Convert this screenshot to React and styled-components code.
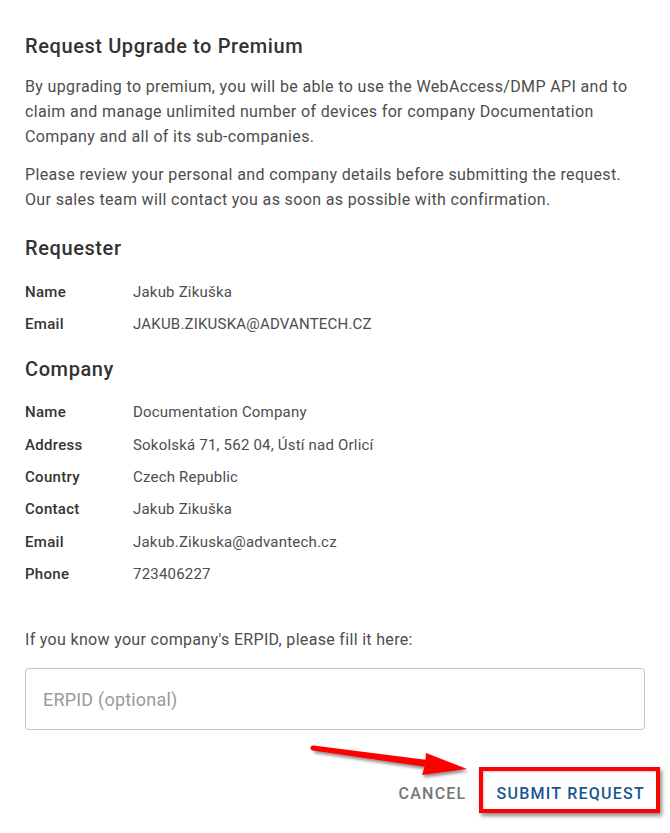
import React from 'react';
import styled, { createGlobalStyle } from 'styled-components';

const GlobalStyle = createGlobalStyle`
  body {
    margin: 0;
    background: #fff;
    font-family: Roboto, "Liberation Sans", sans-serif;
  }
`;

const Page = styled.div`
  position: relative;
  width: 670px;
  height: 833px;
  box-sizing: border-box;
  padding: 32px 25px 0 25px;
  overflow: hidden;
`;

const Title = styled.h2`
  margin: 0;
  font-size: 20px;
  line-height: 28px;
  font-weight: 500;
  color: #333;
  letter-spacing: 0.6px;
`;

const Text = styled.p`
  margin: ${p => p.$top || 0}px 0 0 0;
  font-size: 16px;
  line-height: 25px;
  color: #4d4d4d;
  letter-spacing: 0.36px;
`;

const Section = styled.h3`
  margin: ${p => p.$top}px 0 0 0;
  font-size: 20px;
  line-height: 28px;
  font-weight: 500;
  color: #333;
  letter-spacing: 0.6px;
`;

const Details = styled.div`
  margin-top: ${p => p.$top}px;
  display: grid;
  grid-template-columns: 108px 1fr;
  grid-auto-rows: ${p => p.$row}px;
  align-items: center;
  font-size: 15px;
`;

const Label = styled.div`
  font-weight: 500;
  color: #333;
  letter-spacing: 0.3px;
`;

const Value = styled.div`
  color: #4d4d4d;
  letter-spacing: 0.2px;
`;

const Hint = styled.p`
  margin: 38px 0 0 0;
  font-size: 16px;
  line-height: 24px;
  color: #4d4d4d;
  letter-spacing: 0.32px;
`;

const Input = styled.input`
  display: block;
  box-sizing: border-box;
  width: 100%;
  height: 62px;
  margin-top: 16px;
  padding: 0 17px;
  border: 1px solid #c4c4c4;
  border-radius: 4px;
  font-family: Roboto, "Liberation Sans", sans-serif;
  font-size: 18px;
  letter-spacing: 0.2px;
  color: #333;
  outline: none;

  &::placeholder {
    color: #9a9a9a;
  }
`;

const Actions = styled.div`
  display: flex;
  justify-content: flex-end;
  align-items: center;
  gap: 30px;
  margin-top: 45px;
`;

const Button = styled.button`
  position: relative;
  height: 36px;
  padding: 0;
  border: none;
  background: none;
  font-family: Roboto, "Liberation Sans", sans-serif;
  font-size: 16px;
  font-weight: 500;
  letter-spacing: 1.25px;
  text-transform: uppercase;
  color: ${p => (p.$primary ? '#1b5592' : '#777')};
  cursor: pointer;
`;

const Highlight = styled.span`
  position: absolute;
  top: -8px;
  bottom: -2px;
  left: -18px;
  right: -15px;
  border: 4px solid #f00;
  box-shadow: 2px 3px 4px rgba(0, 0, 0, 0.45), inset 1px 1px 2px rgba(0, 0, 0, 0.2);
  pointer-events: none;
`;

const Arrow = styled.svg`
  position: absolute;
  left: 305px;
  top: 742px;
  width: 172px;
  height: 42px;
  overflow: visible;
`;

const requester = [
  ['Name', 'Jakub Zikuška'],
  ['Email', 'JAKUB.ZIKUSKA@ADVANTECH.CZ'],
];

const company = [
  ['Name', 'Documentation Company'],
  ['Address', 'Sokolská 71, 562 04, Ústí nad Orlicí'],
  ['Country', 'Czech Republic'],
  ['Contact', 'Jakub Zikuška'],
  ['Email', 'Jakub.Zikuska@advantech.cz'],
  ['Phone', '723406227'],
];

const Rows = ({ items }) =>
  items.map(([k, v]) => (
    <React.Fragment key={k}>
      <Label>{k}</Label>
      <Value>{v}</Value>
    </React.Fragment>
  ));

const App = () => (
  <>
    <GlobalStyle />
    <Page>
      <Title>Request Upgrade to Premium</Title>
      <Text $top={14}>
        By upgrading to premium, you will be able to use the WebAccess/DMP API and to claim and
        manage unlimited number of devices for company Documentation Company and all of its
        sub-companies.
      </Text>
      <Text $top={13}>
        Please review your personal and company details before submitting the request. Our sales
        team will contact you as soon as possible with confirmation.
      </Text>

      <Section $top={22}>Requester</Section>
      <Details $top={14} $row={32}>
        <Rows items={requester} />
      </Details>

      <Section $top={15}>Company</Section>
      <Details $top={13} $row={32.4}>
        <Rows items={company} />
      </Details>

      <Hint>If you know your company's ERPID, please fill it here:</Hint>
      <Input placeholder="ERPID (optional)" />

      <Actions>
        <Button>Cancel</Button>
        <Button $primary>
          Submit Request
          <Highlight />
        </Button>
      </Actions>

      <Arrow viewBox="0 0 172 42">
        <defs>
          <filter id="sh" x="-10%" y="-50%" width="130%" height="220%">
            <feDropShadow dx="1.5" dy="2.5" stdDeviation="1.6" floodColor="#000" floodOpacity="0.45" />
          </filter>
        </defs>
        <polygon
          filter="url(#sh)"
          fill="#f00"
          points="8.3,3.5 120.5,17.8 121,11 162,27 117,33 119.5,24.8 7.7,8.5"
        />
        <circle cx="8" cy="6" r="2.5" fill="#f00" />
      </Arrow>
    </Page>
  </>
);

export default App;
